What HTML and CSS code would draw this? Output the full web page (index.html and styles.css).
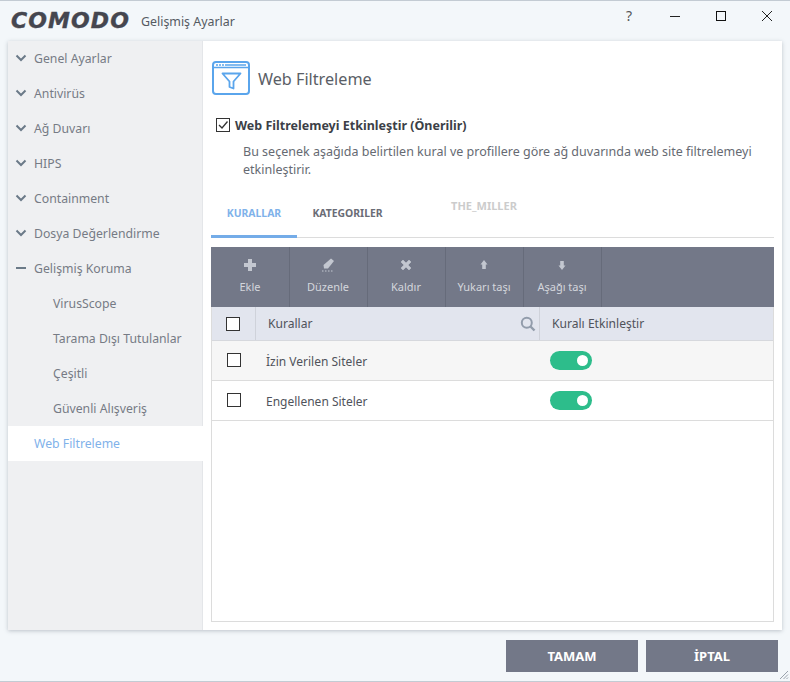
FILE: index.html
```html
<!DOCTYPE html>
<html lang="tr">
<head>
<meta charset="utf-8">
<title>COMODO Gelişmiş Ayarlar</title>
<link rel="stylesheet" href="styles.css">
</head>
<body>
<div class="window">
  <header class="titlebar">
    <span class="logo">COMODO</span>
    <span class="app-title">Gelişmiş Ayarlar</span>
    <div class="win-controls">
      <span class="win-btn help">?</span>
      <span class="win-btn"><svg width="12" height="12" viewBox="0 0 12 12"><path d="M1 6.500h10" stroke="#222" stroke-width="1"/></svg></span>
      <span class="win-btn"><svg width="12" height="12" viewBox="0 0 12 12"><rect x="1.500" y="1.500" width="9" height="9" fill="none" stroke="#111" stroke-width="1"/></svg></span>
      <span class="win-btn"><svg width="12" height="12" viewBox="0 0 12 12"><path d="M1 1l10 10M11 1L1 11" stroke="#222" stroke-width="1"/></svg></span>
    </div>
  </header>

  <main class="panel">
    <nav class="sidebar">
      <div class="nav-item"><svg class="chev" viewBox="0 0 12 8"><path d="M1.500 1.500L6 6l4.500-4.500" fill="none" stroke="#6b7a88" stroke-width="2"/></svg>Genel Ayarlar</div>
      <div class="nav-item"><svg class="chev" viewBox="0 0 12 8"><path d="M1.500 1.500L6 6l4.500-4.500" fill="none" stroke="#6b7a88" stroke-width="2"/></svg>Antivirüs</div>
      <div class="nav-item"><svg class="chev" viewBox="0 0 12 8"><path d="M1.500 1.500L6 6l4.500-4.500" fill="none" stroke="#6b7a88" stroke-width="2"/></svg>Ağ Duvarı</div>
      <div class="nav-item"><svg class="chev" viewBox="0 0 12 8"><path d="M1.500 1.500L6 6l4.500-4.500" fill="none" stroke="#6b7a88" stroke-width="2"/></svg>HIPS</div>
      <div class="nav-item"><svg class="chev" viewBox="0 0 12 8"><path d="M1.500 1.500L6 6l4.500-4.500" fill="none" stroke="#6b7a88" stroke-width="2"/></svg>Containment</div>
      <div class="nav-item"><svg class="chev" viewBox="0 0 12 8"><path d="M1.500 1.500L6 6l4.500-4.500" fill="none" stroke="#6b7a88" stroke-width="2"/></svg>Dosya Değerlendirme</div>
      <div class="nav-item"><svg class="chev" viewBox="0 0 12 8"><path d="M1 4h10" fill="none" stroke="#6b7a88" stroke-width="2"/></svg>Gelişmiş Koruma</div>
      <div class="nav-item sub">VirusScope</div>
      <div class="nav-item sub">Tarama Dışı Tutulanlar</div>
      <div class="nav-item sub">Çeşitli</div>
      <div class="nav-item sub">Güvenli Alışveriş</div>
      <div class="nav-item active">Web Filtreleme</div>
    </nav>

    <section class="content">
      <div class="page-head">
        <svg class="page-icon" width="38" height="34" viewBox="0 0 38 34">
          <rect x="1" y="1" width="36" height="32" rx="3" fill="none" stroke="#5aa5ec" stroke-width="2"/>
          <path d="M1 6.500h36" stroke="#5aa5ec" stroke-width="1.500"/>
          <path d="M4 4h2M7 4h2M10 4h2M13 4h21" stroke="#5aa5ec" stroke-width="1.500"/>
          <path d="M10.500 12.500h18l-7 8v7l-4-1.500v-5.500z" fill="none" stroke="#5aa5ec" stroke-width="1.800" stroke-linejoin="round"/>
        </svg>
        <h1 class="page-title">Web Filtreleme</h1>
      </div>

      <div class="enable-row">
        <span class="box checked"><svg width="12" height="12" viewBox="0 0 12 12"><path d="M2 6l3 3 5.500-6.500" fill="none" stroke="#333" stroke-width="1.300"/></svg></span>
        <span class="enable-label">Web Filtrelemeyi Etkinleştir (Önerilir)</span>
      </div>
      <p class="desc">Bu seçenek aşağıda belirtilen kural ve profillere göre ağ duvarında web site filtrelemeyi etkinleştirir.</p>

      <div class="tabs">
        <span class="tab current">KURALLAR</span>
        <span class="tab second">KATEGORILER</span>
        <span class="tab ghost">THE_MILLER</span>
      </div>

      <div class="toolbar">
        <div class="tool">
          <svg width="14" height="14" viewBox="0 0 14 14"><path d="M5 1h4v4h4v4H9v4H5V9H1V5h4z" fill="#c3c7d0"/></svg>
          <span>Ekle</span>
        </div>
        <div class="tool">
          <svg width="14" height="14" viewBox="0 0 14 14"><path d="M10 .5l3 2.500-6 7.500H3l-.5-3.500z" fill="#c3c7d0"/><path d="M1 13h1.500M4 13h1.500M7 13h1.500M10 13h1.500" stroke="#c3c7d0"/></svg>
          <span>Düzenle</span>
        </div>
        <div class="tool">
          <svg width="14" height="14" viewBox="0 0 14 14"><path d="M2 4l2-2 3 3 3-3 2 2-3 3 3 3-2 2-3-3-3 3-2-2 3-3z" fill="#c3c7d0" stroke="#c3c7d0" stroke-width=".6"/></svg>
          <span>Kaldır</span>
        </div>
        <div class="tool">
          <svg width="14" height="14" viewBox="0 0 14 14"><path d="M7 2l3.500 4.500H8.800V11H5.200V6.500H3.500z" fill="#c3c7d0"/></svg>
          <span>Yukarı taşı</span>
        </div>
        <div class="tool">
          <svg width="14" height="14" viewBox="0 0 14 14"><path d="M7 12l3.500-4.500H8.800V3H5.200v4.500H3.500z" fill="#c3c7d0"/></svg>
          <span>Aşağı taşı</span>
        </div>
      </div>

      <div class="table">
        <div class="row head">
          <div class="cell-check"><span class="box"></span></div>
          <div class="cell-name">Kurallar
            <svg class="search" width="16" height="16" viewBox="0 0 16 16"><circle cx="6.800" cy="6.800" r="5" fill="none" stroke="#929cab" stroke-width="2"/><path d="M10.500 10.500l4 4" stroke="#929cab" stroke-width="2.400"/></svg>
          </div>
          <div class="cell-state">Kuralı Etkinleştir</div>
        </div>
        <div class="row alt">
          <div class="cell-check"><span class="box"></span></div>
          <div class="cell-name">İzin Verilen Siteler</div>
          <div class="cell-state"><span class="toggle"></span></div>
        </div>
        <div class="row">
          <div class="cell-check"><span class="box"></span></div>
          <div class="cell-name">Engellenen Siteler</div>
          <div class="cell-state"><span class="toggle"></span></div>
        </div>
      </div>
    </section>
  </main>

  <footer class="footer">
    <button class="btn">TAMAM</button>
    <button class="btn">İPTAL</button>
    <svg class="grip" width="10" height="10" viewBox="0 0 10 10"><path d="M9 1L1 9M9 4.500L4.500 9M9 7.500L7.500 9" stroke="#9aa3ad" stroke-width="1"/></svg>
  </footer>
</div>
</body>
</html>
```

FILE: styles.css
```css
* { box-sizing: border-box; }
html, body { margin: 0; padding: 0; }
body {
  font-family: "Noto Sans", "Open Sans", sans-serif;
  font-size: 13px;
  color: #444;
}
.window {
  width: 790px;
  height: 682px;
  background: #f3f7fa;
  border-top: 1px solid #c3cbd3;
  border-bottom: 1px solid #c3cbd3;
  display: flex;
  flex-direction: column;
}
.titlebar {
  height: 40px;
  flex: none;
  display: flex;
  align-items: center;
  padding-left: 11px;
}
.logo {
  font-family: "DejaVu Sans", sans-serif;
  font-weight: 700;
  font-style: italic;
  font-size: 22px;
  letter-spacing: 1.100px;
  color: #45464f;
  -webkit-text-stroke: .4px #45464f;
  width: 130px;
  line-height: 42px;
}
.app-title { font-size: 12.400px; color: #555a62; }
.win-controls { margin-left: auto; display: flex; }
.win-btn {
  width: 46px;
  height: 30px;
  display: flex;
  align-items: center;
  justify-content: center;
  margin-top: -11px;
}
.help { font-size: 14px; color: #555; }

.panel {
  flex: none;
  height: 589px;
  margin: 0 8px;
  display: flex;
  background: #fff;
  box-shadow: 0 1px 4px rgba(90, 100, 115, .35);
}
.sidebar {
  width: 195px;
  flex: none;
  background: #eff0f2;
  border-right: 1px solid #e4e6e9;
}
.nav-item {
  height: 35px;
  display: flex;
  align-items: center;
  padding: 0 0 1px 7px;
  color: #767b85;
  font-size: 12.250px;
}
.chev { width: 12px; height: 8px; margin-right: 7px; flex: none; }
.nav-item.sub { padding-left: 45px; }
.nav-item.active {
  background: #fff;
  color: #7fb2ea;
  padding-left: 26px;
  margin-right: -1px;
}

.content { flex: 1; padding: 20px 8px 0 8px; min-width: 0; display: flex; flex-direction: column; }
.page-head { display: flex; align-items: center; gap: 8px; height: 34px; margin-left: 1px; }
.page-icon { flex: none; }
.page-title { margin: 2px 0 0; font-size: 16.200px; font-weight: 400; color: #5a5e66; }

.enable-row { display: flex; align-items: center; margin: 22px 0 0 5px; gap: 5px; height: 16px; }
.box {
  width: 14px;
  height: 14px;
  border: 1px solid #333;
  background: #fff;
  display: inline-flex;
  align-items: center;
  justify-content: center;
  flex: none;
}
.enable-label { font-weight: 700; font-size: 12.500px; color: #3c3f47; }
.desc { margin: 10px 20px 0 32px; font-size: 12.500px; line-height: 18px; color: #666a72; }

.tabs {
  display: flex;
  height: 48px;
  margin-top: 11px;
  border-bottom: 1px solid #dcdcdc;
  flex: none;
}
.tab {
  font-size: 10.400px;
  font-weight: 700;
  color: #6a6c76;
  display: flex;
  align-items: center;
  justify-content: center;
}
.tab.current {
  width: 86px;
  height: 48px;
  color: #7fb2ea;
  border-bottom: 3px solid #74ace8;
}
.tab.second { margin-left: 16px; width: 69px; height: 46px; }
.tab.ghost { color: #cccccc; margin-left: 69px; width: 66px; height: 30px; font-size: 11px; white-space: nowrap; }

.toolbar {
  display: flex;
  height: 60px;
  margin-top: 9px;
  padding-left: 1px;
  background: #737888;
  flex: none;
}
.tool {
  width: 78px;
  border-right: 1px solid #666b7a;
  display: flex;
  flex-direction: column;
  align-items: center;
  padding: 11px 1px 0 0;
  gap: 7px;
  color: #d3d6dc;
  font-size: 11px;
}
.tool span { line-height: 16px; }

.table {
  flex: 1;
  margin-bottom: 8px;
  border: 1px solid #dcdcdc;
  border-top: 0;
  display: flex;
  flex-direction: column;
}
.row {
  display: flex;
  height: 40px;
  border-bottom: 1px solid #dcdcdc;
  align-items: center;
  background: #fff;
  color: #50535b;
  font-size: 12px;
  flex: none;
}
.row.alt { background: #f6f6f6; }
.row.head { height: 34px; background: #e2e5ee; border-bottom: 1px solid #d6d8dd; font-size: 12.100px; }
.cell-check { width: 43px; display: flex; justify-content: center; flex: none; padding-bottom: 2px; }
.cell-name { width: 285px; padding: 2px 0 0 11px; flex: none; display: flex; align-items: center; }
.cell-state { flex: 1; padding-left: 10px; display: flex; align-items: center; }
.head .cell-check,
.head .cell-name,
.head .cell-state { height: 100%; align-items: center; padding-top: 0; padding-bottom: 0; }
.head .cell-check { padding-right: 1px; }
.head .cell-name { border-left: 1px solid #cfd2da; border-right: 1px solid #cfd2da; padding-left: 12px; }
.head .cell-state { padding-left: 12px; }
.search { margin-left: auto; margin-right: 3px; }
.toggle {
  width: 42px;
  height: 19px;
  border-radius: 10px;
  background: #2dbd8b;
  display: flex;
  justify-content: flex-end;
  align-items: center;
  padding-right: 4px;
  margin-bottom: 1px;
}
.toggle::after {
  content: "";
  width: 11px;
  height: 11px;
  border-radius: 50%;
  background: #fff;
}

.footer {
  flex: 1;
  display: flex;
  justify-content: flex-end;
  gap: 8px;
  padding: 10px 12px 0 0;
  position: relative;
}
.btn {
  width: 132px;
  height: 32px;
  border: 0;
  background: #737888;
  color: #fff;
  font-family: "Noto Sans", sans-serif;
  font-weight: 700;
  font-size: 13px;
  padding: 0;
}
.grip { position: absolute; right: 1px; bottom: 1px; }
```
